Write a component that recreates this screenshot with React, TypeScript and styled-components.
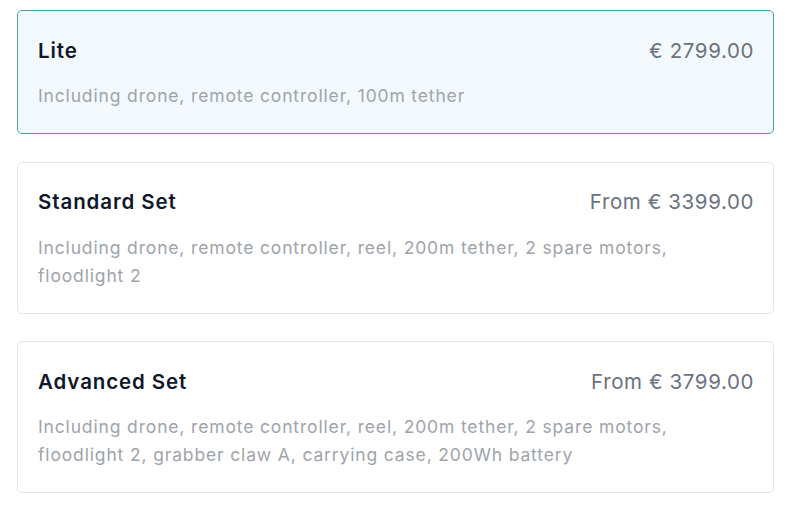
import React from "react";
import styled, { createGlobalStyle } from "styled-components";

const Global = createGlobalStyle`
  html, body { margin: 0; padding: 0; background: #ffffff; }
  body { font-family: "Inter", "Open Sans", sans-serif; -webkit-font-smoothing: antialiased; }
`;

const List = styled.div`
  display: flex;
  flex-direction: column;
  gap: 27.5px;
  padding: 10px 18px 0 17px;
`;

const Card = styled.div<{ $selected?: boolean }>`
  border: 1px solid ${(p) => (p.$selected ? "#4c9fa6" : "#e3e5e8")};
  background: ${(p) => (p.$selected ? "#f3f9fc" : "#ffffff")};
  border-radius: 5px;
  padding: 24px 20px 23px 20px;
  display: flex;
  flex-direction: column;
  gap: 17px;
`;

const Header = styled.div`
  display: flex;
  justify-content: space-between;
  align-items: center;
  height: 30px;
`;

const Title = styled.div`
  font-size: 20.5px;
  font-weight: 600;
  color: #0f172a;
  letter-spacing: 0.9px;
`;

const Price = styled.div`
  font-size: 20.5px;
  font-weight: 400;
  color: #6b7280;
  letter-spacing: 0.6px;
  margin-right: -1px;
`;

const Desc = styled.div`
  font-size: 17.5px;
  line-height: 28px;
  color: #a0a4ab;
  letter-spacing: 0.85px;
  padding-right: 20px;
`;

const plans = [
  { name: "Lite", price: "€ 2799.00", desc: "Including drone, remote controller, 100m tether", selected: true },
  { name: "Standard Set", price: "From € 3399.00", desc: "Including drone, remote controller, reel, 200m tether, 2 spare motors, floodlight 2" },
  { name: "Advanced Set", price: "From € 3799.00", desc: "Including drone, remote controller, reel, 200m tether, 2 spare motors, floodlight 2, grabber claw A, carrying case, 200Wh battery" },
];

export default function App() {
  return (
    <>
      <Global />
      <List>
        {plans.map((p) => (
          <Card key={p.name} $selected={p.selected}>
            <Header>
              <Title>{p.name}</Title>
              <Price>{p.price}</Price>
            </Header>
            <Desc>{p.desc}</Desc>
          </Card>
        ))}
      </List>
    </>
  );
}
